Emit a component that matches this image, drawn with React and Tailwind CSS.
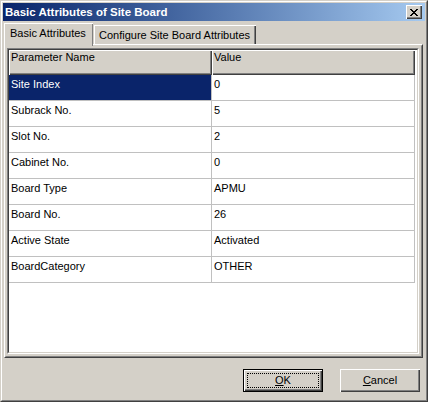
import React from "react";

const rows = [
  ["Site Index", "0"],
  ["Subrack No.", "5"],
  ["Slot No.", "2"],
  ["Cabinet No.", "0"],
  ["Board Type", "APMU"],
  ["Board No.", "26"],
  ["Active State", "Activated"],
  ["BoardCategory", "OTHER"],
];

export default function App() {
  return (
    <div className="w-[428px] h-[402px] bg-[#d4d0c8] border border-t-[#d4d0c8] border-l-[#d4d0c8] border-r-[#404040] border-b-[#404040] font-['Liberation_Sans',Arial,sans-serif] text-[11px] text-black leading-[13px]">
      <div className="h-full flex flex-col border border-t-white border-l-white border-r-[#808080] border-b-[#808080] p-px">
        {/* Title bar */}
        <div className="h-[18px] shrink-0 flex items-center justify-between pl-[2px] pr-[3px] bg-linear-to-r from-[#0a246a] to-[#a6caf0]">
          <span className="text-white font-bold text-[11.5px] leading-[14px]">Basic Attributes of Site Board</span>
          <div className="w-[16px] h-[14px] bg-[#d4d0c8] shadow-[inset_1px_1px_#fff,inset_-1px_-1px_#404040,inset_-2px_-2px_#808080] flex items-center justify-center">
            <svg width="8" height="7" viewBox="0 0 8 7" shapeRendering="crispEdges">
              <path d="M0 0h2v1h-2zM6 0h2v1h-2zM1 1h2v1h-2zM5 1h2v1h-2zM2 2h4v1h-4zM3 3h2v1h-2zM2 4h4v1h-4zM1 5h2v1h-2zM5 5h2v1h-2zM0 6h2v1h-2zM6 6h2v1h-2z" fill="#000" />
            </svg>
          </div>
        </div>

        {/* Tabs */}
        <div className="h-[21px] mt-[2px] ml-px flex items-end shrink-0">
          <div className="relative z-10 h-[23px] -mb-[2px] w-[89px] bg-[#d4d0c8] border-t border-l border-white shadow-[inset_-1px_0_#808080] pl-[5px] pt-[3px]">
            Basic Attributes
          </div>
          <div className="h-[19px] w-[162px] ml-px border-t border-l border-white shadow-[inset_-1px_0_#404040,inset_-2px_0_#808080] pl-[4px] pt-[3px]">
            Configure Site Board Attributes
          </div>
        </div>

        {/* Panel */}
        <div className="h-[314px] shrink-0 ml-px mr-[2px] border border-t-white border-l-white border-r-[#404040] border-b-[#404040]">
          <div className="h-full border border-t-[#d4d0c8] border-l-[#d4d0c8] border-r-[#808080] border-b-[#808080] pt-[2px] pl-px pr-[2px] pb-[2px]">
            <div className="h-full bg-white border border-t-[#808080] border-l-[#808080] border-r-white border-b-white">
              <div className="h-full border border-t-[#404040] border-l-[#404040] border-r-[#d4d0c8] border-b-[#d4d0c8] bg-white">
                {/* Header */}
                <div className="flex">
                  <div className="w-[203px] h-[25px] bg-[#d4d0c8] shadow-[inset_1px_1px_#fff,inset_-1px_-1px_#404040,inset_-2px_-2px_#808080] pl-[2px] pt-[1px]">
                    Parameter Name
                  </div>
                  <div className="w-[203px] h-[25px] bg-[#d4d0c8] shadow-[inset_1px_1px_#fff,inset_-1px_-1px_#404040,inset_-2px_-2px_#808080] pl-[2px] pt-[1px]">
                    Value
                  </div>
                </div>
                {rows.map(([k, v], i) => (
                  <div key={k} className="flex">
                    <div
                      className={
                        i === 0
                          ? "w-[203px] h-[26px] border-r border-b border-[#c0c0c0] pl-[2px] pt-[3px] bg-[#0a246a] text-white"
                          : "w-[203px] h-[26px] border-r border-b border-[#c0c0c0] pl-[2px] pt-[3px]"
                      }
                    >
                      {k}
                    </div>
                    <div className="w-[203px] h-[26px] border-r border-b border-[#c0c0c0] pl-[2px] pt-[3px]">
                      {v}
                    </div>
                  </div>
                ))}
              </div>
            </div>
          </div>
        </div>

        {/* Footer */}
        <div className="flex-1 flex justify-end items-start pt-[11px] pr-[5px] gap-[17px]">
          <div className="w-[80px] h-[23px] border border-black">
            <div className="h-full bg-[#d4d0c8] shadow-[inset_1px_1px_#fff,inset_-1px_-1px_#404040,inset_-2px_-2px_#808080] p-[3px]">
              <div className="h-full border border-dotted border-black flex items-center justify-center">
                <span><span className="underline">O</span>K</span>
              </div>
            </div>
          </div>
          <div className="w-[80px] h-[23px] bg-[#d4d0c8] shadow-[inset_1px_1px_#fff,inset_-1px_-1px_#404040,inset_-2px_-2px_#808080] flex items-center justify-center">
            <span><span className="underline">C</span>ancel</span>
          </div>
        </div>
      </div>
    </div>
  );
}
